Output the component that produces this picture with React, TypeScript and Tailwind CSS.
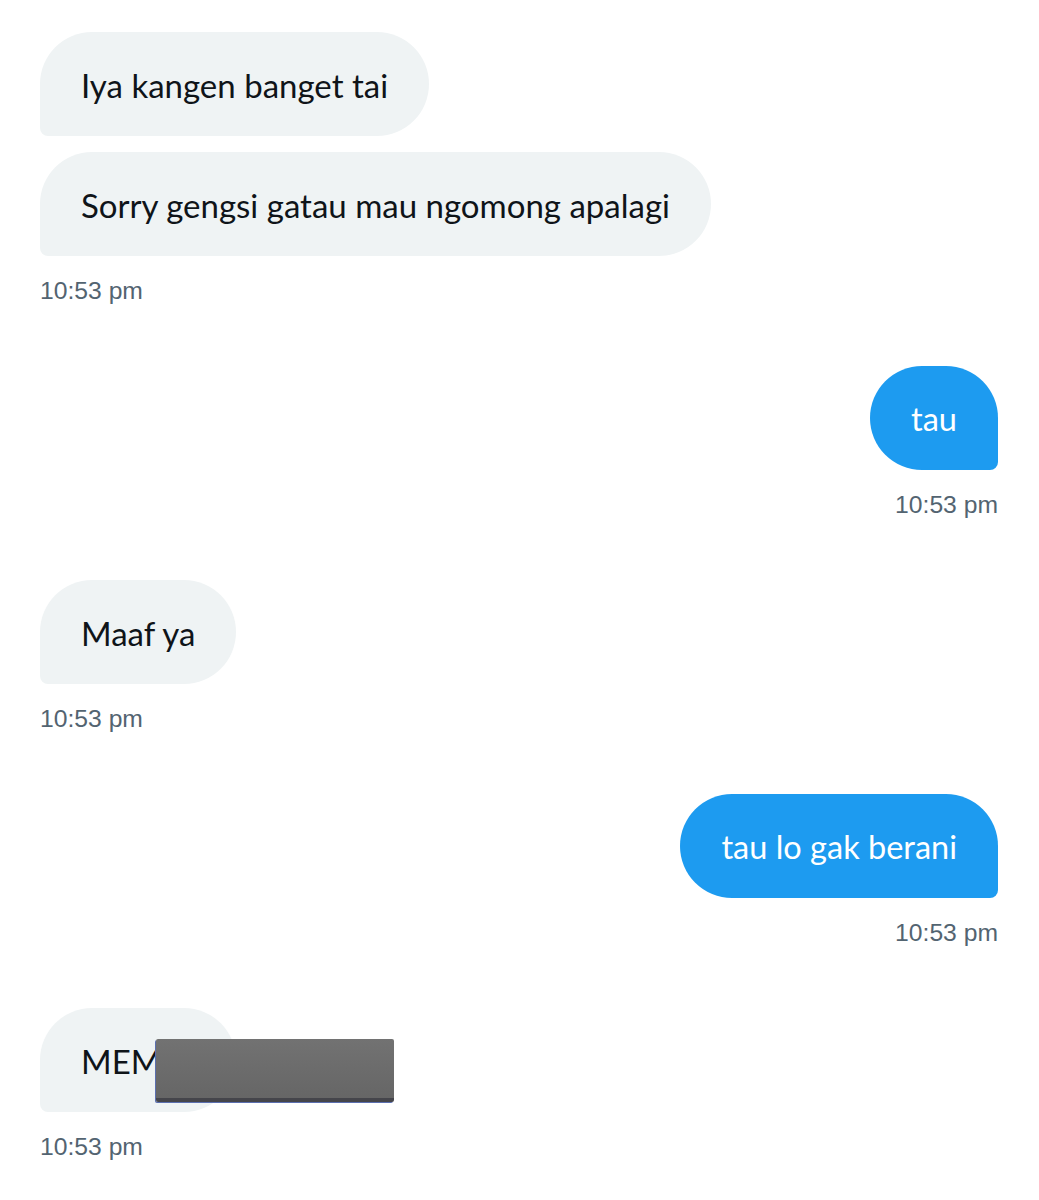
import React from "react";

function Received({ text, children, w }: { text: string; children?: React.ReactNode; w?: string }) {
  return (
    <div className="relative flex">
      <div className={`h-[104px] flex items-center px-[41px] pt-[4px] bg-[#eff3f4] rounded-[52px] rounded-bl-[8px] text-[33px] text-[#0f1419] font-['Lato',sans-serif] ${w ?? ""}`}>
        {text}
      </div>
      {children}
    </div>
  );
}

function Sent({ text }: { text: string }) {
  return (
    <div className="flex justify-end">
      <div className="h-[104px] flex items-center px-[41px] pt-[3px] bg-[#1d9bf0] rounded-[52px] rounded-br-[8px] text-[32.5px] text-white font-['Lato',sans-serif]">
        {text}
      </div>
    </div>
  );
}

function Time({ right }: { right?: boolean }) {
  return (
    <div className={`mt-[20px] h-[30px] leading-[30px] text-[24.7px] text-[#536471] font-['Liberation_Sans',sans-serif] ${right ? "text-right" : ""}`}>
      10:53 pm
    </div>
  );
}

export default function App() {
  return (
    <div className="w-[1039px] h-[1200px] bg-white pt-[32px] pl-[40px] pr-[41px]">
      <div className="flex flex-col gap-[16px]">
        <Received text="Iya kangen banget tai" />
        <Received text="Sorry gengsi gatau mau ngomong apalagi" />
      </div>
      <Time />
      <div className="mt-[60px]">
        <Sent text="tau" />
        <Time right />
      </div>
      <div className="mt-[60px]">
        <Received text="Maaf ya" />
        <Time />
      </div>
      <div className="mt-[60px]">
        <Sent text="tau lo gak berani" />
        <Time right />
      </div>
      <div className="mt-[60px]">
        <Received text="MEM" w="w-[196px]">
          <div className="absolute left-[116px] top-[31px] w-[238px] h-[63px] bg-gradient-to-b from-[#727272] to-[#666666] rounded-[2px] border-b-[4px] border-[#45454b] shadow-[-1px_1px_0_#5b6fb0]" />
        </Received>
        <Time />
      </div>
    </div>
  );
}
